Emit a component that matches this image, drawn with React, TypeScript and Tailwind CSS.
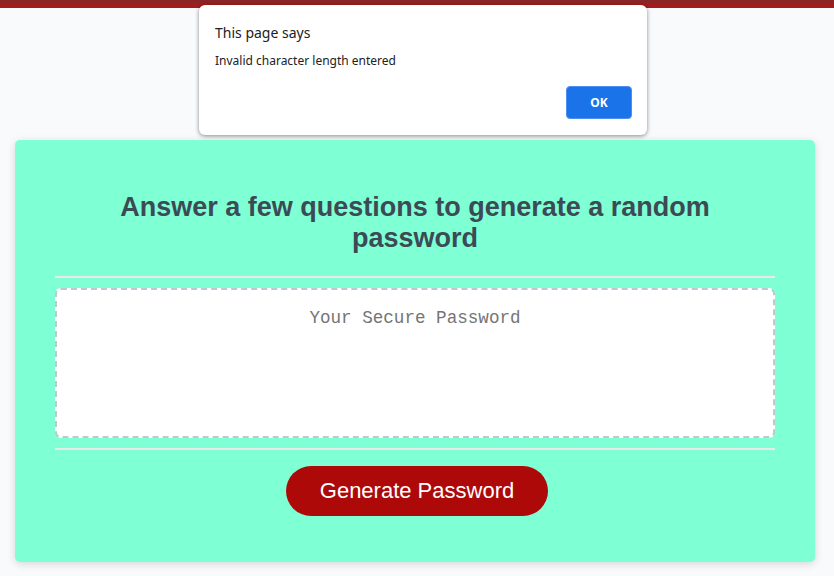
import React from "react";

export default function App() {
  return (
    <div className="relative min-h-[576px] bg-[#f9fafc] font-['Liberation_Sans',Arial,sans-serif]">
      {/* top strip */}
      <div className="h-[3px] bg-[#8b2424]" />
      <div className="h-[5px] bg-[#a31c1c]" />

      <div className="pt-[132px] pl-[15px] pb-[14px]">
        <div className="w-[800px] rounded-[5px] bg-[#7fffd4] px-[40px] py-[30px] text-[18px] text-[#3c4a54] shadow-[0_2px_8px_rgba(0,0,0,0.15)]">
          <div>
            <h2 className="my-[22px] text-center text-[27px] font-bold leading-[31px]">
              Answer a few questions to generate a random password
            </h2>
            <div className="h-[2px] bg-[#e7e9eb]" />
          </div>
          <div>
            <textarea
              readOnly
              placeholder="Your Secure Password"
              className="my-[10px] block h-[150px] w-full resize-none overflow-hidden rounded-[6px] border-2 border-dashed border-[#c0c7cf] bg-white px-[15px] pt-[17px] text-center font-['Liberation_Mono',monospace] text-[17.6px] leading-[22px] placeholder:text-[#757575] outline-none"
            />
          </div>
          <div className="text-center">
            <div className="h-[2px] bg-[#e7e9eb]" />
            <button className="mb-[16px] ml-[20px] mr-[16px] mt-[16px] inline-block rounded-[25px] bg-[#ad0909] px-[34px] py-[14px] text-[22px] leading-[22px] text-white">
              Generate Password
            </button>
          </div>
        </div>
      </div>

      {/* browser alert */}
      <div className="absolute left-[199px] top-[5px] h-[130px] w-[448px] rounded-[6px] bg-white shadow-[0_1px_4px_rgba(0,0,0,0.45)] font-['Noto_Sans','Open_Sans',sans-serif] text-[#202124]">
        <div className="pl-[16px] pt-[18px] text-[14px] leading-[20px]">This page says</div>
        <div className="pl-[16px] pt-[10px] text-[12px] leading-[16px]">Invalid character length entered</div>
        <div className="flex justify-end pr-[15px] pt-[17px]">
          <button className="h-[33px] w-[66px] rounded-[4px] border border-[#4d8ff0] bg-[#1a73e8] text-[12px] font-bold text-white">
            OK
          </button>
        </div>
      </div>
    </div>
  );
}
